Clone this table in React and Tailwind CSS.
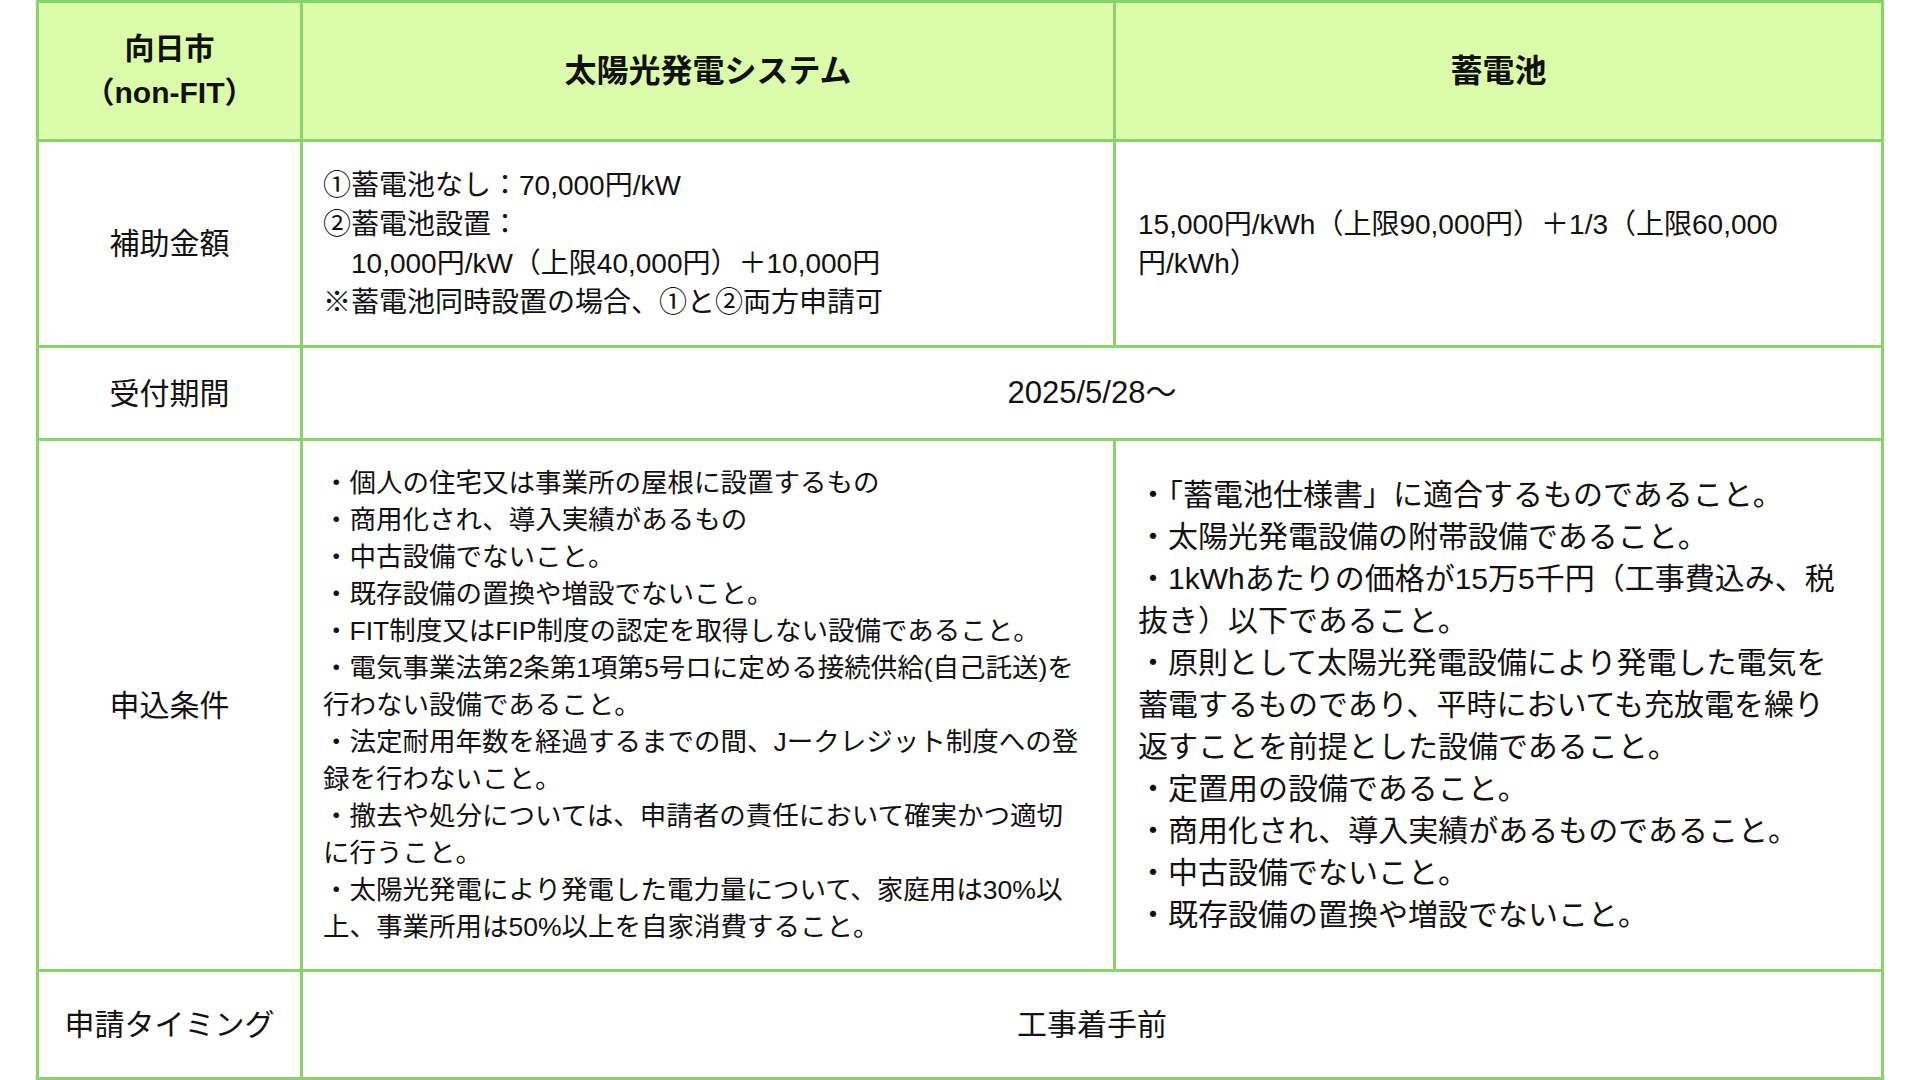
const FONT = "font-['Liberation_Sans','Noto_Sans_CJK_JP',sans-serif]";

const subsidySolar = [
  "①蓄電池なし：70,000円/kW",
  "②蓄電池設置：",
  "\u300010,000円/kW（上限40,000円）＋10,000円",
  "※蓄電池同時設置の場合、①と②両方申請可",
];

const subsidyBattery = ["15,000円/kWh（上限90,000円）＋1/3（上限60,000", "円/kWh）"];

const condSolar = [
  "・個人の住宅又は事業所の屋根に設置するもの",
  "・商用化され、導入実績があるもの",
  "・中古設備でないこと。",
  "・既存設備の置換や増設でないこと。",
  "・FIT制度又はFIP制度の認定を取得しない設備であること。",
  "・電気事業法第2条第1項第5号ロに定める接続供給(自己託送)を",
  "行わない設備であること。",
  "・法定耐用年数を経過するまでの間、Jークレジット制度への登",
  "録を行わないこと。",
  "・撤去や処分については、申請者の責任において確実かつ適切",
  "に行うこと。",
  "・太陽光発電により発電した電力量について、家庭用は30%以",
  "上、事業所用は50%以上を自家消費すること。",
];

const condBattery = [
  "・「蓄電池仕様書」に適合するものであること。",
  "・太陽光発電設備の附帯設備であること。",
  "・1kWhあたりの価格が15万5千円（工事費込み、税",
  "抜き）以下であること。",
  "・原則として太陽光発電設備により発電した電気を",
  "蓄電するものであり、平時においても充放電を繰り",
  "返すことを前提とした設備であること。",
  "・定置用の設備であること。",
  "・商用化され、導入実績があるものであること。",
  "・中古設備でないこと。",
  "・既存設備の置換や増設でないこと。",
];

function Lines({ items }) {
  return items.map((t, i) => (
    <div key={i} className="whitespace-nowrap">
      {t}
    </div>
  ));
}

const cell = "border-[3px] border-[#88d469] align-middle";

export default function App() {
  return (
    <div className={`w-[1920px] h-[1080px] bg-white text-[#111] ${FONT}`}>
      <table className="ml-[36px] w-[1845px] table-fixed border-collapse">
        <colgroup>
          <col className="w-[264px]" />
          <col className="w-[813px]" />
          <col className="w-[768px]" />
        </colgroup>
        <tbody>
          {/* Header */}
          <tr className="h-[139px] bg-[#dbfcaa]">
            <th className={`${cell} text-center text-[30px] leading-[44px] font-bold`}>
              <div>向日市</div>
              <div>（non-FIT）</div>
            </th>
            <th className={`${cell} text-center text-[32px] font-bold`}>太陽光発電システム</th>
            <th className={`${cell} text-center text-[32px] font-bold`}>蓄電池</th>
          </tr>

          {/* 補助金額 */}
          <tr className="h-[206px]">
            <td className={`${cell} text-center text-[30px]`}>補助金額</td>
            <td className={`${cell} pl-[20px] text-[28px] leading-[39px]`}>
              <Lines items={subsidySolar} />
            </td>
            <td className={`${cell} pl-[22px] text-[28px] leading-[39px]`}>
              <Lines items={subsidyBattery} />
            </td>
          </tr>

          {/* 受付期間 */}
          <tr className="h-[93px]">
            <td className={`${cell} text-center text-[30px]`}>受付期間</td>
            <td colSpan={2} className={`${cell} text-center text-[31px]`}>
              2025/5/28〜
            </td>
          </tr>

          {/* 申込条件 */}
          <tr className="h-[531px]">
            <td className={`${cell} text-center text-[30px]`}>申込条件</td>
            <td className={`${cell} pl-[20px] text-[26.5px] leading-[37px]`}>
              <Lines items={condSolar} />
            </td>
            <td className={`${cell} pl-[22px] text-[30px] leading-[42px]`}>
              <Lines items={condBattery} />
            </td>
          </tr>

          {/* 申請タイミング */}
          <tr className="h-[108px]">
            <td className={`${cell} text-center text-[30px]`}>申請タイミング</td>
            <td colSpan={2} className={`${cell} text-center text-[30px]`}>
              工事着手前
            </td>
          </tr>
        </tbody>
      </table>
    </div>
  );
}
